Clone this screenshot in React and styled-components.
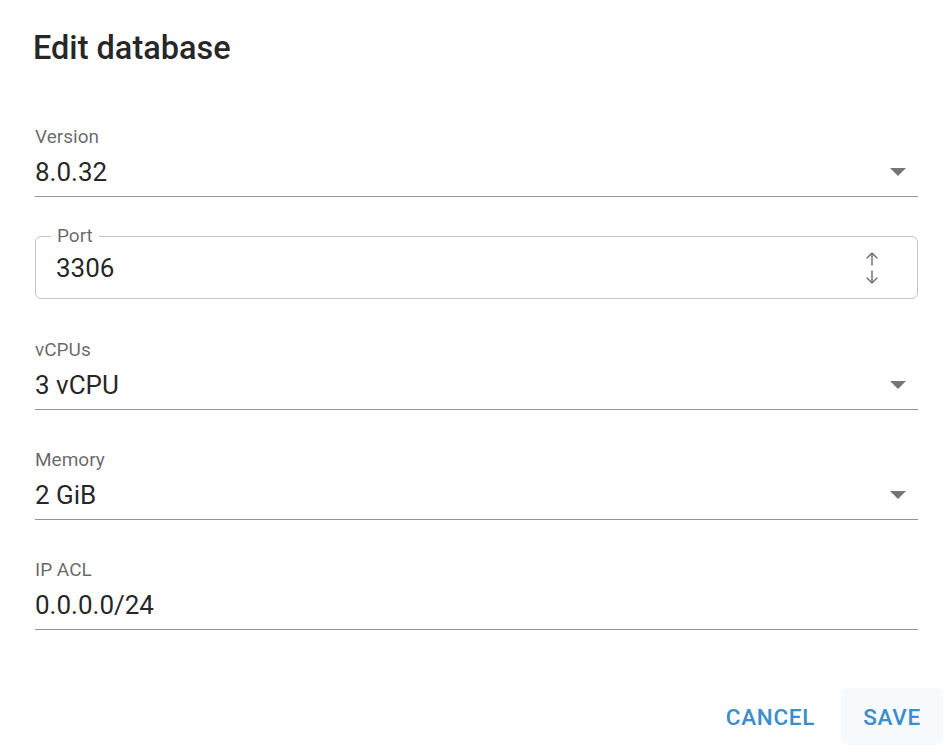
import styled, { createGlobalStyle } from "styled-components";

const GlobalStyle = createGlobalStyle`
  html, body {
    margin: 0;
    padding: 0;
    background: #fff;
  }
  body {
    font-family: Roboto, "Liberation Sans", sans-serif;
    color: rgba(0, 0, 0, 0.87);
  }
`;

const Dialog = styled.div`
  width: 950px;
  height: 752px;
  background: #fff;
  padding-top: 24px;
  box-sizing: border-box;
`;

const Title = styled.h2`
  margin: 0 0 53px;
  padding: 0 32px 0 33px;
  font-size: 32.5px;
  line-height: 48px;
  font-weight: 500;
  color: rgba(0, 0, 0, 0.87);
`;

const Form = styled.div`
  display: flex;
  flex-direction: column;
  gap: 38px;
  padding: 0 32px 0 35px;
`;

const Field = styled.div`
  display: flex;
  flex-direction: column;
  border-bottom: 1px solid rgba(0, 0, 0, 0.42);
  padding-bottom: 7px;
`;

const Label = styled.label`
  font-size: 19px;
  line-height: 24px;
  color: rgba(0, 0, 0, 0.6);
  margin-bottom: 6px;
`;

const InputRow = styled.div`
  display: flex;
  align-items: center;
  justify-content: space-between;
  height: 34px;
`;

const Value = styled.span`
  font-size: 26px;
  line-height: 34px;
  color: rgba(0, 0, 0, 0.87);
`;

const Outlined = styled.div`
  position: relative;
  display: flex;
  align-items: center;
  justify-content: space-between;
  height: 63px;
  margin: 1px 0;
  box-sizing: border-box;
  border: 1px solid rgba(0, 0, 0, 0.23);
  border-radius: 6px;
  padding: 0 38px 0 20px;
`;

const Legend = styled.span`
  position: absolute;
  left: 15px;
  top: -13px;
  padding: 0 6px;
  background: #fff;
  font-size: 19px;
  line-height: 24px;
  color: rgba(0, 0, 0, 0.6);
`;

const Actions = styled.div`
  display: flex;
  justify-content: flex-end;
  gap: 13px;
  margin-top: 58px;
  padding-right: 7px;
`;

const Button = styled.button`
  display: inline-flex;
  align-items: center;
  justify-content: center;
  height: 57px;
  min-width: 102px;
  padding: 0 13px;
  border: none;
  border-radius: 6px;
  background: ${(p) => (p.$active ? "rgba(25, 118, 210, 0.04)" : "transparent")};
  color: #3b8dcc;
  font-family: Roboto, "Liberation Sans", sans-serif;
  font-size: 22.5px;
  font-weight: 500;
  letter-spacing: 0.03em;
  text-transform: uppercase;
  cursor: pointer;
`;

const CaretBox = styled.span`
  display: flex;
  margin-right: 11px;
`;

const Caret = () => (
  <svg width="18" height="10" viewBox="0 0 18 10">
    <path d="M1 1h16l-8 8z" fill="#757575" />
  </svg>
);

const Stepper = () => (
  <svg width="14" height="34" viewBox="0 0 14 34" fill="none" stroke="#767676" strokeWidth="1.5" strokeLinecap="round" strokeLinejoin="round">
    <path d="M7 2v12M2 7l5-5 5 5" />
    <path d="M7 20v12M2 27l5 5 5-5" />
  </svg>
);

function SelectField({ label, value }) {
  return (
    <Field>
      <Label>{label}</Label>
      <InputRow>
        <Value>{value}</Value>
        <CaretBox>
          <Caret />
        </CaretBox>
      </InputRow>
    </Field>
  );
}

export default function App() {
  return (
    <>
      <GlobalStyle />
      <Dialog>
        <Title>Edit database</Title>
        <Form>
          <SelectField label="Version" value="8.0.32" />
          <Outlined>
            <Legend>Port</Legend>
            <Value>3306</Value>
            <Stepper />
          </Outlined>
          <SelectField label="vCPUs" value="3 vCPU" />
          <SelectField label="Memory" value="2 GiB" />
          <Field>
            <Label>IP ACL</Label>
            <InputRow>
              <Value>0.0.0.0/24</Value>
            </InputRow>
          </Field>
        </Form>
        <Actions>
          <Button>Cancel</Button>
          <Button $active>Save</Button>
        </Actions>
      </Dialog>
    </>
  );
}
